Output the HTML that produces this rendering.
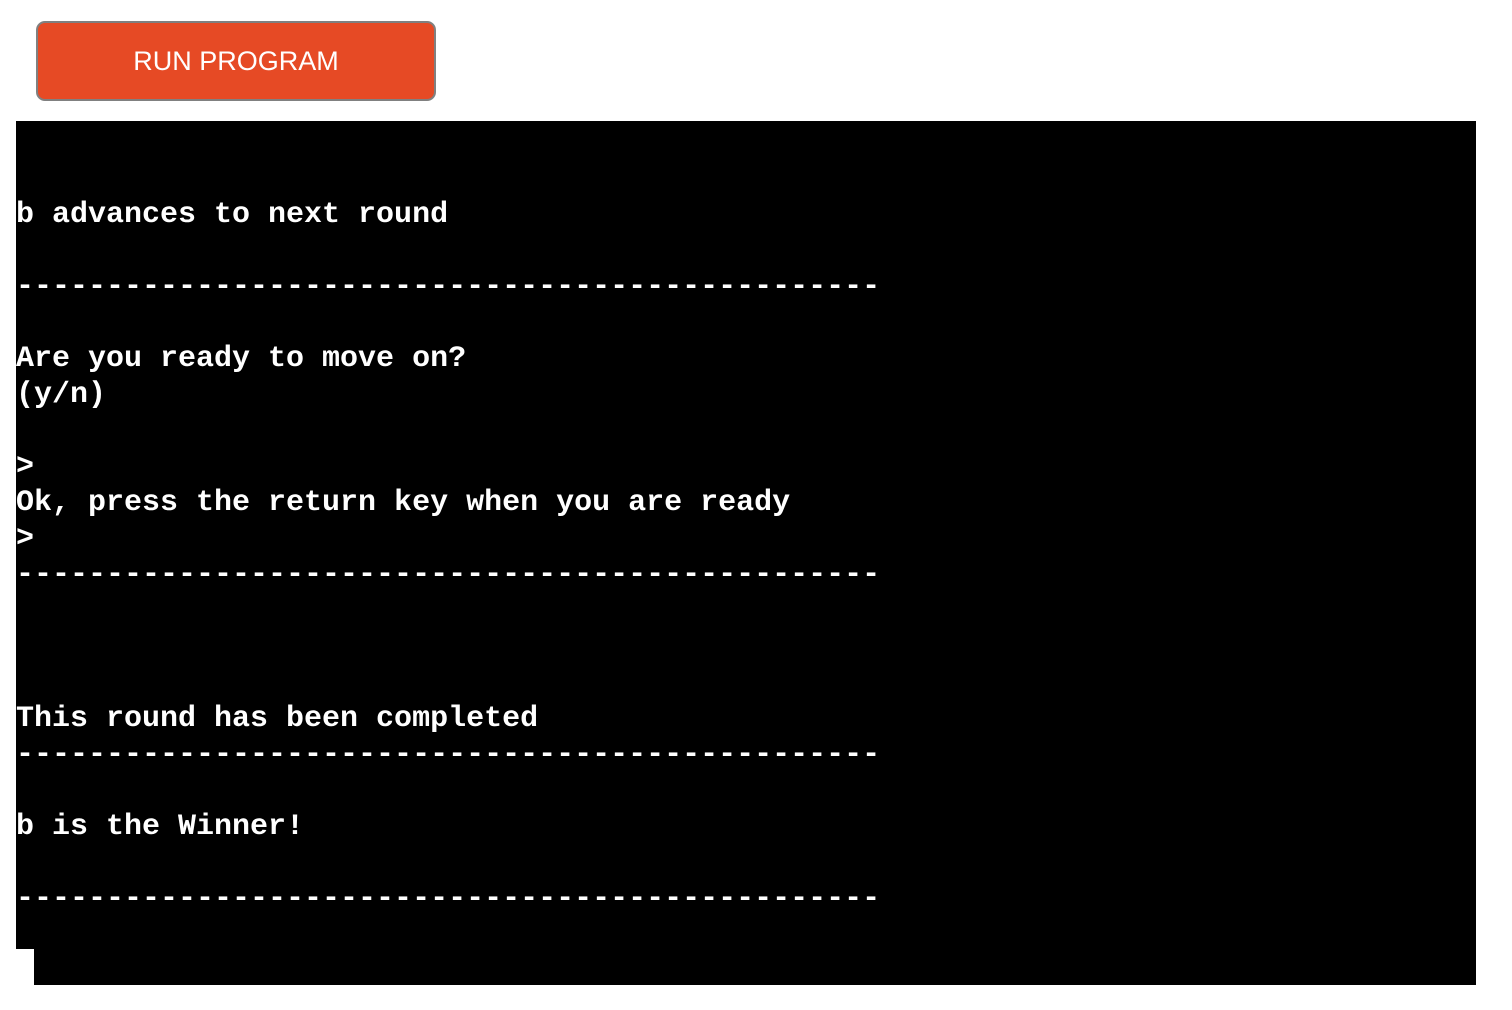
<!DOCTYPE html>
<html><head><style>
html,body{margin:0;padding:0;background:#fff;width:1512px;height:1010px;overflow:hidden}
.btn{position:absolute;left:36px;top:21px;width:396px;height:76px;background:#E64A25;border:2px solid #808080;border-radius:9px;color:#fff;font-family:"Liberation Sans",sans-serif;font-size:27px;line-height:76px;text-align:center}
.term{position:absolute;left:16px;top:121px;width:1460px;height:864px;background:#000;overflow:hidden}
pre{margin:0;padding-top:4px;color:#fff;font-family:"Liberation Mono",monospace;font-weight:bold;font-size:30px;line-height:36px}
.cur{position:absolute;left:16px;top:949px;width:18px;height:36px;background:#fff}
</style></head><body>
<div class="btn">RUN PROGRAM</div>
<div class="term"><pre>


b advances to next round

------------------------------------------------

Are you ready to move on?
(y/n)

&gt;
Ok, press the return key when you are ready
&gt;
------------------------------------------------



This round has been completed
------------------------------------------------

b is the Winner!

------------------------------------------------
</pre></div>
<div class="cur"></div>
</body></html>
